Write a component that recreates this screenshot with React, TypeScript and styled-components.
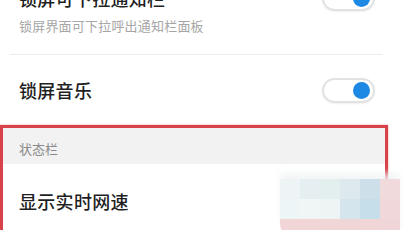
import React from 'react'
import styled, { createGlobalStyle } from 'styled-components'

const GlobalStyle = createGlobalStyle`
  html, body {
    margin: 0;
    padding: 0;
    background: #ffffff;
    overflow: hidden;
  }
  body {
    font-family: "Noto Sans CJK SC", "Noto Sans", sans-serif;
  }
`

const mosaic = [
  ['#eef4f6', '#e5eef1', '#e3eeee', '#dde9ec', '#cde0ea', '#f0dadb'],
  ['#eef5f6', '#f0f6f6', '#eef4f4', '#d5e5ee', '#c6deea', '#f0d8da'],
  ['#f1d5d7', '#f1d5d7', '#f1d6d8', '#f1d6d8', '#f1d5d7', '#f0d6d8'],
]

const Toggle: React.FC = () => (
  <Track>
    <Knob />
  </Track>
)

const App: React.FC = () => {
  return (
    <Page>
      <GlobalStyle />
      <Row>
        <TextBlock>
          <Title>锁屏可下拉通知栏</Title>
          <Subtitle>锁屏界面可下拉呼出通知栏面板</Subtitle>
        </TextBlock>
        <Toggle />
      </Row>
      <Divider />
      <SimpleRow>
        <Title>锁屏音乐</Title>
        <Toggle />
      </SimpleRow>
      <Highlight>
        <SectionHeader>状态栏</SectionHeader>
        <SimpleRow $tall>
          <Title>显示实时网速</Title>
        </SimpleRow>
        <Mosaic>
          {mosaic.map((row, r) =>
            row.map((c, i) => <Cell key={`${r}-${i}`} $color={c} />)
          )}
        </Mosaic>
      </Highlight>
    </Page>
  )
}

export default App

const Page = styled.div`
  width: 403px;
  height: 244px;
  margin-top: -14px;
`

const Row = styled.div`
  display: flex;
  align-items: flex-start;
  justify-content: space-between;
  padding: 0 28px 19px 19px;
`

const TextBlock = styled.div`
  display: flex;
  flex-direction: column;
  gap: 7px;
`

const Title = styled.div`
  font-size: 18px;
  line-height: 24px;
  font-weight: 500;
  color: #1f1f1f;
  letter-spacing: 0.3px;
`

const Subtitle = styled.div`
  font-size: 13px;
  line-height: 18px;
  color: #a6a6a6;
  letter-spacing: 0.2px;
`

const Divider = styled.div`
  height: 1px;
  margin: 0 20px 0 10px;
  background: #ededed;
`

const SimpleRow = styled.div<{ $tall?: boolean }>`
  display: flex;
  align-items: center;
  justify-content: space-between;
  height: 70px;
  padding: ${(p) => (p.$tall ? '3px 28px 0 16px' : '0 28px 0 19px')};
  box-sizing: border-box;
`

const Track = styled.div`
  width: 53px;
  height: 25px;
  box-sizing: border-box;
  border: 2px solid #e2e2e2;
  border-radius: 13px;
  background: #ffffff;
  box-shadow: 0 1px 2px rgba(0, 0, 0, 0.06);
  display: flex;
  align-items: center;
  justify-content: flex-end;
  padding-right: 3px;
`

const Knob = styled.div`
  width: 17px;
  height: 17px;
  border-radius: 50%;
  background: #1e88e5;
`

const Highlight = styled.div`
  position: relative;
  width: 388px;
  height: 112px;
  box-sizing: border-box;
  border: 3px solid #d8434a;
  box-shadow: 0 0 2px rgba(216, 67, 74, 0.5);
`

const SectionHeader = styled.div`
  height: 36px;
  box-sizing: border-box;
  padding: 12px 0 0 16px;
  background: #f2f2f2;
  font-size: 13px;
  line-height: 18px;
  color: #8a8a8a;
`

const Mosaic = styled.div`
  position: absolute;
  left: 277px;
  top: 51px;
  display: grid;
  grid-template-columns: repeat(6, 20px);
  grid-template-rows: repeat(3, 20px);
  border-bottom-left-radius: 16px;
  overflow: hidden;
  box-shadow: 0 -6px 6px rgba(240, 244, 245, 0.8);
`

const Cell = styled.div<{ $color: string }>`
  background: ${(p) => p.$color};
`
